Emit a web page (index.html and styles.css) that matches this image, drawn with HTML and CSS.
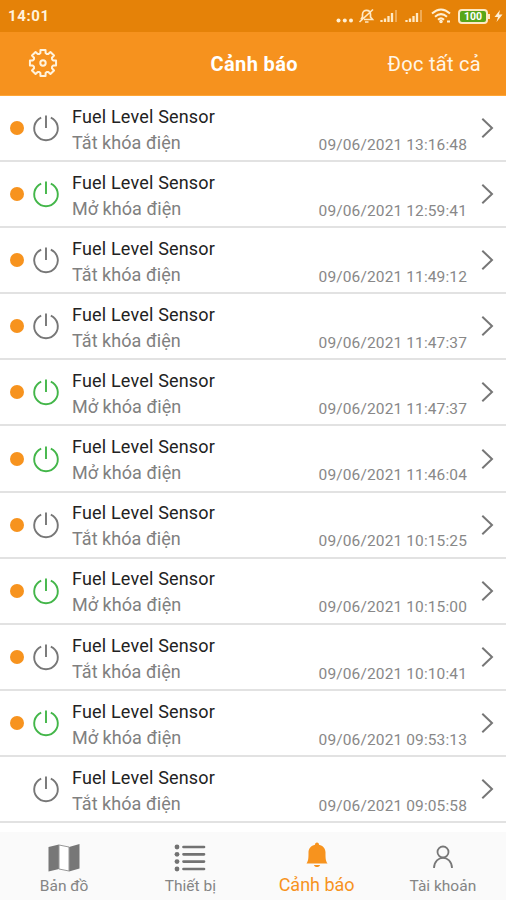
FILE: index.html
```html
<!DOCTYPE html>
<html lang="vi">
<head>
<meta charset="utf-8">
<title>Cảnh báo</title>
<link rel="stylesheet" href="styles.css">
</head>
<body>
<svg width="0" height="0" class="defs">
  <symbol id="power" viewBox="0 0 28 28"><path d="M9.2 3.6A11.8 11.8 0 1 0 18.8 3.6M14 1.5V14" fill="none" stroke="currentColor" stroke-width="1.9"/></symbol>
  <symbol id="chevron" viewBox="0 0 13 22"><path d="M1.3 1.7L11 11L1.3 20.3" fill="none" stroke="currentColor" stroke-width="2"/></symbol>
  <symbol id="signal" viewBox="0 0 18 14"><path d="M1.5 13V11M5 13V9.5M8.5 13V7M12 13V4" stroke="#ffe9c4" stroke-width="2.3"/><path d="M16 13V1" stroke="#f0ab55" stroke-width="2"/></symbol>
</svg>
<div class="status">
  <span class="clock">14:01</span>
  <div class="status-icons">
    <svg class="dots" width="18" height="5" viewBox="0 0 18 5"><g fill="#fff0d5"><circle cx="2.5" cy="2.5" r="2"/><circle cx="8.8" cy="2.5" r="2"/><circle cx="15" cy="2.5" r="2"/></g></svg>
    <svg class="mute" width="17" height="16" viewBox="0 0 17 16" fill="none" stroke="#ffe9c4" stroke-width="1.7"><path d="M3 11.5L4.5 9V6.5C4.5 1 12.5 1 12.5 6.5V9L14.5 11.5H6M7 14H10.5M1.5 14L15 1.5"/></svg>
    <svg class="sig1" width="18" height="14"><use href="#signal"/></svg>
    <svg class="sig2" width="18" height="14"><use href="#signal"/></svg>
    <svg class="wifi" width="21" height="16" viewBox="0 0 21 16" fill="none" stroke="#fff0d5" stroke-width="2"><path d="M1 5.5Q10 -2.5 19 5.5M4 8.7Q10 3.5 16 8.7M7 11.8Q10 9 13 11.8"/><circle cx="10" cy="13.5" r=".8"/><path d="M16 13.5H19"/></svg>
    <span class="battery">100</span>
    <svg class="bolt" width="9" height="14" viewBox="0 0 9 14"><path d="M6 1L.5 8H4L2.5 13L8.5 5.5H5Z" fill="#fff0d5"/></svg>
  </div>
</div>
<header class="bar">
  <svg class="gear" width="30" height="30" viewBox="-15 -15 30 30" fill="none" stroke="#fff3dd" stroke-width="2" stroke-linejoin="round"><path id="gear-outline"/><circle r="2.7"/></svg>
  <h1>Cảnh báo</h1>
  <span class="read-all">Đọc tất cả</span>
</header>
<main id="list"></main>
<nav class="tabs">
  <div class="tab"><svg width="34" height="30" viewBox="0 0 34 30"><path d="M1.5 4L12 1.5V26L1.5 28.5Z M22 4L32.5 1V25.5L22 28.5Z" fill="#777"/><path d="M12 2L22 4V28L12 26Z" fill="#fff" stroke="#999" stroke-width="1"/></svg><span>Bản đồ</span></div>
  <div class="tab"><svg width="34" height="30" viewBox="0 0 34 30"><g fill="#727272"><circle cx="4" cy="4" r="2.4"/><circle cx="4" cy="11.3" r="2.4"/><circle cx="4" cy="18.6" r="2.4"/><circle cx="4" cy="26" r="2.4"/></g><path d="M10.5 4H31M10.5 11.3H31M10.5 18.6H31M10.5 26H31" stroke="#727272" stroke-width="2.7" stroke-linecap="round"/></svg><span>Thiết bị</span></div>
  <div class="tab active"><svg width="34" height="30" viewBox="0 0 34 30"><path d="M17 .5C18.3 .5 19 1.5 19 2.7C23 3.5 25.5 6.5 25.5 10.5C25.5 16 25.5 18.5 27.5 21.5H6.5C8.5 18.5 8.5 16 8.5 10.5C8.5 6.5 11 3.5 15 2.7C15 1.5 15.7 .5 17 .5ZM14 23H20C19.5 25.7 14.5 25.7 14 23Z" fill="#f7931e"/></svg><span>Cảnh báo</span></div>
  <div class="tab"><svg width="34" height="30" viewBox="0 0 34 30" fill="none" stroke="#777" stroke-width="1.8"><circle cx="17" cy="9" r="5.5"/><path d="M8 25C8.5 11.5 25.5 11.5 26 25"/></svg><span>Tài khoản</span></div>
</nav>
<script src="app.js"></script>
</body>
</html>
```
FILE: styles.css
```css
* { box-sizing: border-box; }
body { margin: 0; width: 506px; height: 900px; overflow: hidden; background: #fff; font-family: Roboto, "Liberation Sans", sans-serif; display: flex; flex-direction: column; }
svg { display: block; flex: none; }
.defs { position: absolute; }
.status { height: 32px; background: #e58208; display: flex; align-items: center; justify-content: space-between; padding: 0 3px 0 8px; flex: none; }
.clock { color: #fff3dd; font-size: 15px; font-weight: 700; letter-spacing: .6px; }
.status-icons { display: flex; align-items: center; height: 32px; }
.dots { margin: 8px 4px 0 0; }
.mute { margin-right: 5px; }
.sig1 { margin-right: 7px; }
.sig2 { margin-right: 8px; }
.wifi { margin-right: 6px; }
.battery { width: 30px; height: 15px; margin-right: 6px; border: 2px solid #ffe9c4; border-radius: 4px; background: #58a618; color: #fff; font-size: 10.5px; line-height: 11px; font-weight: 700; text-align: center; position: relative; }
.battery::after { content: ""; position: absolute; right: -4px; top: 3px; width: 2px; height: 5px; background: #ffe9c4; }
.bar { height: 64px; flex: none; background: #f6921e; border-bottom: 1px solid #ffa636; display: grid; grid-template-columns: 1fr auto 1fr; align-items: center; padding: 1.5px 25px 0 27.5px; color: #fff; }
.bar h1 { margin: 0; font-size: 20px; font-weight: 700; letter-spacing: .4px; }
.gear { margin-top: -2px; }
.read-all { justify-self: end; font-size: 20px; letter-spacing: .3px; color: #fff6e8; }
#list { flex: 1; min-height: 0; overflow: hidden; }
.row { height: 66.1px; border-bottom: 2px solid #e2e2e2; display: flex; align-items: center; padding: 0 12px 0 10px; }
.dot { width: 14px; height: 14px; border-radius: 50%; background: #f7931e; margin-right: 8px; }
.read .dot { visibility: hidden; }
.power { color: #777; margin-right: 12px; }
.on .power { color: #43b649; }
.text { flex: 1; display: flex; flex-direction: column; padding-top: 4.5px; }
.name { font-size: 18px; line-height: 26px; letter-spacing: .18px; color: #222; }
.detail { display: flex; justify-content: space-between; align-items: baseline; font-size: 18px; line-height: 26px; letter-spacing: .05px; color: #808080; }
.time { font-size: 15.5px; letter-spacing: .12px; color: #888; position: relative; top: 1px; }
.chevron { color: #777; margin-left: 14px; }
.tabs { height: 68px; flex: none; background: #fafafa; display: grid; grid-template-columns: repeat(4, 1fr); padding-left: 1px; }
.tab { display: flex; flex-direction: column; align-items: center; padding-top: 11px; color: #858585; font-size: 15.5px; line-height: 26px; }
.tab.active { color: #f7931e; font-size: 18px; padding-top: 10px; }
```
FILE: app.js
```js
const alerts = [
  [0, '13:16:48'], [1, '12:59:41'], [0, '11:49:12'], [0, '11:47:37'],
  [1, '11:47:37'], [1, '11:46:04'], [0, '10:15:25'], [1, '10:15:00'],
  [0, '10:10:41'], [1, '09:53:13'], [0, '09:05:58', true]
];
document.getElementById('list').innerHTML = alerts.map(([on, time, read]) => `
  <div class="row ${on ? 'on' : ''} ${read ? 'read' : ''}">
    <span class="dot"></span>
    <svg class="power" width="28" height="28"><use href="#power"/></svg>
    <div class="text">
      <span class="name">Fuel Level Sensor</span>
      <div class="detail"><span class="action">${on ? 'Mở' : 'Tắt'} khóa điện</span><span class="time">09/06/2021 ${time}</span></div>
    </div>
    <svg class="chevron" width="13" height="22"><use href="#chevron"/></svg>
  </div>`).join('');

// Eight-toothed gear outline: each tooth is given as [degrees from its centre, radius].
const tooth = [[-22.5, 9.8], [-14.5, 10.4], [-11, 13.3], [11, 13.3], [14.5, 10.4]];
const points = [];
for (let k = 0; k < 8; k++) {
  for (const [a, r] of tooth) {
    const t = (k * 45 + a) * Math.PI / 180;
    points.push((r * Math.sin(t)).toFixed(2) + ' ' + (-r * Math.cos(t)).toFixed(2));
  }
}
document.getElementById('gear-outline').setAttribute('d', 'M' + points.join('L') + 'Z');
```
